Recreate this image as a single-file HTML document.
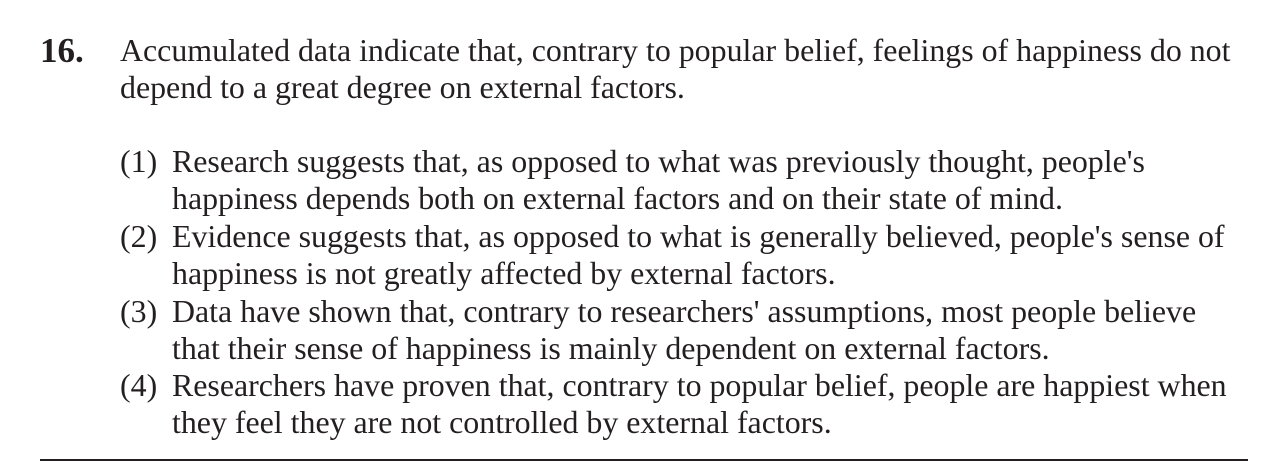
<!DOCTYPE html>
<html><head><meta charset="utf-8"><style>
body{margin:0;width:1288px;height:472px;background:#fff;position:relative;font-family:"Liberation Serif",serif;color:#231f20;overflow:hidden}
.l{position:absolute;font-size:31.9px;white-space:nowrap;line-height:1}
.n{position:absolute;left:40px;top:33px;font-size:35px;font-weight:bold;line-height:1}
.hr{position:absolute;left:40px;top:459px;width:1208px;height:2px;background:#231f20}
</style></head><body>
<div class="n">16.</div>
<div class="l" style="left:120px;top:35px">Accumulated data indicate that, contrary to popular belief, feelings of happiness do not</div>
<div class="l" style="left:120px;top:72px">depend to a great degree on external factors.</div>
<div class="l" style="left:120px;top:146px">(1)</div>
<div class="l" style="left:172px;top:146px">Research suggests that, as opposed to what was previously thought, people's</div>
<div class="l" style="left:172px;top:183px">happiness depends both on external factors and on their state of mind.</div>
<div class="l" style="left:120px;top:221px">(2)</div>
<div class="l" style="left:172px;top:221px">Evidence suggests that, as opposed to what is generally believed, people's sense of</div>
<div class="l" style="left:172px;top:258px">happiness is not greatly affected by external factors.</div>
<div class="l" style="left:120px;top:296px">(3)</div>
<div class="l" style="left:172px;top:296px">Data have shown that, contrary to researchers' assumptions, most people believe</div>
<div class="l" style="left:172px;top:333px">that their sense of happiness is mainly dependent on external factors.</div>
<div class="l" style="left:120px;top:370px">(4)</div>
<div class="l" style="left:172px;top:370px">Researchers have proven that, contrary to popular belief, people are happiest when</div>
<div class="l" style="left:172px;top:407px">they feel they are not controlled by external factors.</div>
<div class="hr"></div>
</body></html>
